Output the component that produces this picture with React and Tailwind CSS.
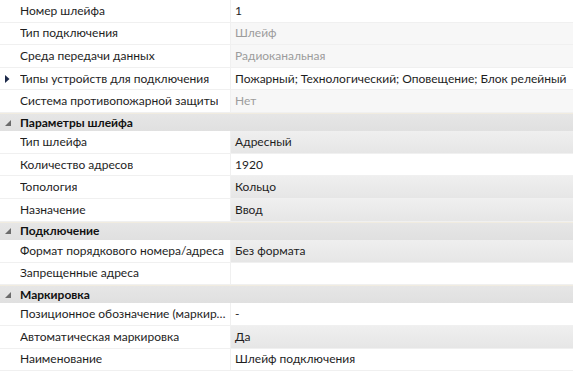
const font = "font-['Segoe_UI','Lato',sans-serif]";

const sections = [
  {
    rows: [
      { name: 'Номер шлейфа', value: '1', kind: 'edit' },
      { name: 'Тип подключения', value: 'Шлейф', kind: 'off' },
      { name: 'Среда передачи данных', value: 'Радиоканальная', kind: 'off' },
      { name: 'Типы устройств для подключения', value: 'Пожарный; Технологический; Оповещение; Блок релейный', kind: 'edit', expand: true },
      { name: 'Система противопожарной защиты', value: 'Нет', kind: 'off' },
    ],
  },
  {
    title: 'Параметры шлейфа',
    rows: [
      { name: 'Тип шлейфа', value: 'Адресный', kind: 'combo' },
      { name: 'Количество адресов', value: '1920', kind: 'edit' },
      { name: 'Топология', value: 'Кольцо', kind: 'combo' },
      { name: 'Назначение', value: 'Ввод', kind: 'combo' },
    ],
  },
  {
    title: 'Подключение',
    rows: [
      { name: 'Формат порядкового номера/адреса', value: 'Без формата', kind: 'combo' },
      { name: 'Запрещенные адреса', value: '', kind: 'edit' },
    ],
  },
  {
    title: 'Маркировка',
    rows: [
      { name: 'Позиционное обозначение (маркировка)', value: '-', kind: 'edit' },
      { name: 'Автоматическая маркировка', value: 'Да', kind: 'combo' },
      { name: 'Наименование', value: 'Шлейф подключения', kind: 'edit' },
    ],
  },
];

const valueCls = {
  edit: 'bg-white text-[#1e1e1e]',
  off: 'bg-[#f7f7f7] text-[#9c9c9c]',
  combo: 'bg-gradient-to-b from-[#efefef] to-[#e6e6e6] text-[#1e1e1e]',
};

function ExpandArrow() {
  return (
    <svg width="5" height="8" viewBox="0 0 5 8" className="absolute left-[5px] top-[7px]">
      <path d="M0 0 L4.5 4 L0 8 Z" fill="#1d2a4a" />
    </svg>
  );
}

function CollapseArrow() {
  return (
    <svg width="6" height="6" viewBox="0 0 6 6" className="shrink-0 ml-[5px] mr-[9px]">
      <path d="M6 0 L6 6 L0 6 Z" fill="#6b6b6b" />
    </svg>
  );
}

function Row({ row }) {
  return (
    <div className="flex h-[22.6px] border-b border-[#f0f0f0]">
      <div className="relative w-[231px] shrink-0 flex items-center pl-[20px] pr-[3px] bg-white text-[#1e1e1e] border-r border-[#f0f0f0]">
        {row.expand && <ExpandArrow />}
        <span className="truncate">{row.name}</span>
      </div>
      <div className={`flex-1 min-w-0 flex items-center pl-[4px] whitespace-nowrap overflow-hidden ${valueCls[row.kind]}`}>
        {row.value}
      </div>
    </div>
  );
}

export default function App() {
  return (
    <div className={`${font} text-[12px] w-[573px] h-[374px] bg-white overflow-hidden`}>
      {sections.map((s, i) => (
        <div key={i}>
          {s.title && (
            <div className="flex items-center h-[18.3px] bg-gradient-to-b from-[#e6e6e6] to-[#e0e0e0] border-t border-[#f1ece0] font-bold text-[#111]">
              <CollapseArrow />
              {s.title}
            </div>
          )}
          {s.rows.map(r => (
            <Row key={r.name} row={r} />
          ))}
        </div>
      ))}
    </div>
  );
}
